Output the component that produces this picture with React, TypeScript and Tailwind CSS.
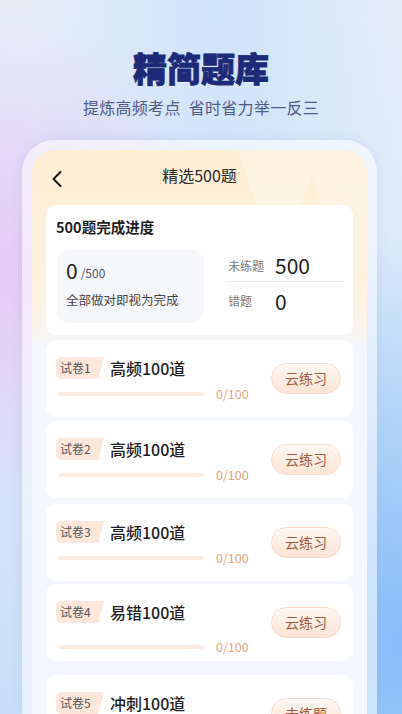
import React from "react";

const font = { fontFamily: '"Noto Sans CJK SC", "Noto Sans", sans-serif' };

type Paper = { no: number; title: string; btn: string; barGap: string; mt: string };

const papers: Paper[] = [
  { no: 1, title: "高频100道", btn: "云练习", barGap: "mt-[7px]", mt: "mt-[5px]" },
  { no: 2, title: "高频100道", btn: "云练习", barGap: "mt-[7px]", mt: "mt-[4px]" },
  { no: 3, title: "高频100道", btn: "云练习", barGap: "mt-[7px]", mt: "mt-[6px]" },
  { no: 4, title: "易错100道", btn: "云练习", barGap: "mt-[16px]", mt: "mt-[3px]" },
  { no: 5, title: "冲刺100道", btn: "去练题", barGap: "mt-[16px]", mt: "mt-[14px]" },
];

function PaperCard({ p }: { p: Paper }) {
  return (
    <div className={`${p.mt} h-[77px] shrink-0 rounded-[10px] bg-white flex items-center pl-[10px] pr-[12px]`}>
      <div className="flex-1 flex flex-col self-start pt-[17px]">
        <div className="flex items-center h-[22px]">
          <div className="h-[22px] w-[48px] rounded-l-[5px] bg-[#fde6da] [clip-path:polygon(0_0,100%_0,88%_100%,0_100%)] flex items-center pl-[4px] text-[12px] text-[#555] leading-none">
            试卷{p.no}
          </div>
          <div className="ml-[6px] text-[16px] font-medium text-[#1f1f1f] leading-none">{p.title}</div>
        </div>
        <div className={`${p.barGap} flex items-center h-[16px]`}>
          <div className="ml-[2px] w-[146px] h-[4px] rounded-full bg-[#fcebdf]" />
          <div className="ml-[12px] text-[12.5px] text-[#e2a67f] leading-none">0/100</div>
        </div>
      </div>
      <div className="w-[70px] h-[31px] rounded-full border border-[#f8d9c6] bg-[linear-gradient(180deg,#fef7f2,#fde5d6)] flex items-center justify-center text-[14px] text-[#a45a47] shadow-[inset_0_1px_2px_rgba(255,255,255,0.9)]">
        {p.btn}
      </div>
    </div>
  );
}

export default function App() {
  return (
    <div
      style={font}
      className="relative w-[402px] h-[714px] overflow-hidden flex flex-col items-center bg-[radial-gradient(ellipse_at_0%_38%,#e6c9f6_0%,rgba(230,201,246,0)_40%),radial-gradient(ellipse_at_100%_90%,#86bdf8_0%,rgba(134,189,248,0)_45%),radial-gradient(ellipse_at_55%_0%,#cfe3fa_0%,rgba(207,227,250,0)_60%),linear-gradient(180deg,#e6edf7_0%,#d9e8fa_50%,#c9def9_100%)]"
    >
      <div className="mt-[48px] h-[40px] text-[34px] leading-[40px] font-black text-[#1c2a78] [-webkit-text-stroke:0.8px_#1c2a78] [text-shadow:0_1px_0_rgba(255,255,255,0.8)]">
        精简题库
      </div>
      <div className="mt-[7px] h-[24px] flex gap-[8px] text-[16px] leading-[24px] tracking-[0.3px] text-[#4e5a88]">
        <span>提炼高频考点</span>
        <span>省时省力举一反三</span>
      </div>

      <div className="mt-[21px] self-start ml-[22px] w-[355px] flex-1 rounded-t-[32px] border-[10px] border-b-0 border-[rgba(255,255,255,0.55)] shadow-[0_0_10px_rgba(140,170,230,0.25)] overflow-hidden">
        <div className="relative h-full rounded-t-[22px] bg-[linear-gradient(180deg,#fdeed4_0%,#fdf2e1_140px,#fbf4ea_175px,#f4f7fb_195px,#f4f7fb_100%)] px-[14px] flex flex-col overflow-hidden">
          <svg className="absolute right-0 top-0" width="150" height="120" viewBox="0 0 150 120">
            <polygon points="20,0 150,0 150,70 95,25 60,110" fill="#ffffff" opacity="0.28" />
            <polygon points="95,25 150,70 150,120 115,120" fill="#ffffff" opacity="0.2" />
          </svg>

          <div className="relative h-[52px] shrink-0 flex items-center justify-center">
            <svg className="absolute left-[5px] top-[20px]" width="12" height="18" viewBox="0 0 12 18">
              <path d="M9.5 2 L2.5 9 L9.5 16" fill="none" stroke="#1a1a1a" strokeWidth="2" strokeLinecap="round" strokeLinejoin="round" />
            </svg>
            <div className="text-[16px] text-[#2a2a2a] -mt-[2px]">精选500题</div>
          </div>

          <div className="relative mt-[3px] h-[130px] shrink-0 rounded-[10px] bg-white pl-[10px] pr-[9px] pt-[12px]">
            <div className="text-[14.5px] leading-[20px] font-bold text-[#1f1f1f]">500题完成进度</div>
            <div className="mt-[13px] flex">
              <div className="w-[147px] h-[73px] ml-[1px] rounded-[12px] bg-[#f6f7fa] pl-[9px] pt-[10px]">
                <div className="flex items-end leading-none">
                  <span className="text-[21px] text-[#1f1f1f] leading-none">0</span>
                  <span className="ml-[3px] mb-[2px] text-[12px] text-[#555] leading-none">/500</span>
                </div>
                <div className="mt-[13px] text-[12.5px] leading-none text-[#444]">全部做对即视为完成</div>
              </div>
              <div className="ml-[24px] flex-1 flex flex-col">
                <div className="h-[32px] flex items-center border-b border-[#eeeeee]">
                  <span className="w-[47px] text-[12px] text-[#7a7a7a]">未练题</span>
                  <span className="text-[21px] text-[#1f1f1f] leading-none">500</span>
                </div>
                <div className="h-[38px] flex items-center">
                  <span className="w-[47px] text-[12px] text-[#7a7a7a]">错题</span>
                  <span className="text-[21px] text-[#1f1f1f] leading-none">0</span>
                </div>
              </div>
            </div>
          </div>

          {papers.map((p) => (
            <PaperCard key={p.no} p={p} />
          ))}
        </div>
      </div>
    </div>
  );
}
